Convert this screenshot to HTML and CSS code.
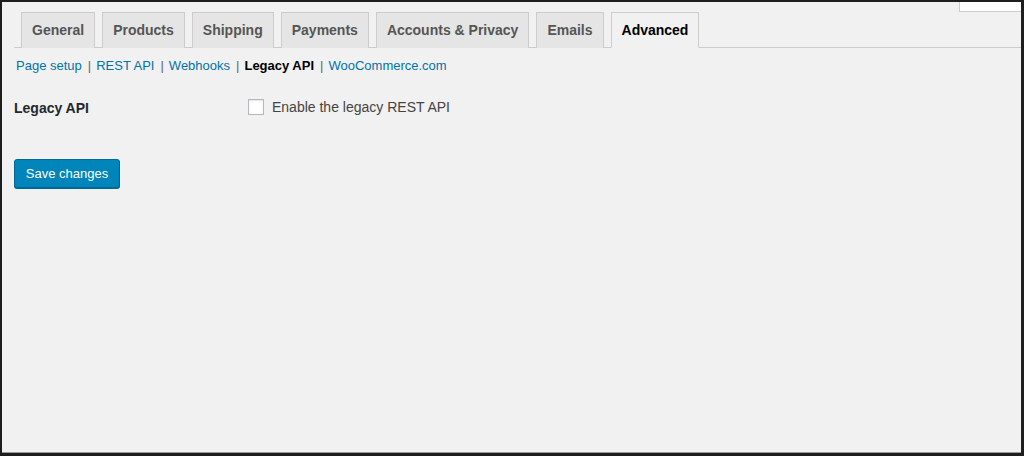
FILE: index.html
```html
<!DOCTYPE html>
<html>
<head>
<meta charset="utf-8">
<link rel="stylesheet" href="styles.css">
</head>
<body>
<div class="frame">
  <div class="topbox"></div>
  <div class="wrap">
    <nav class="tabs">
      <a class="tab">General</a>
      <a class="tab">Products</a>
      <a class="tab">Shipping</a>
      <a class="tab">Payments</a>
      <a class="tab">Accounts &amp; Privacy</a>
      <a class="tab">Emails</a>
      <a class="tab active">Advanced</a>
    </nav>
    <ul class="subnav">
      <li><a class="link">Page setup</a><span class="sep">|</span></li>
      <li><a class="link">REST API</a><span class="sep">|</span></li>
      <li><a class="link">Webhooks</a><span class="sep">|</span></li>
      <li><a class="link current">Legacy API</a><span class="sep">|</span></li>
      <li><a class="link">WooCommerce.com</a></li>
    </ul>
    <div class="row">
      <div class="label">Legacy API</div>
      <label class="field"><span class="check"></span><span>Enable the legacy REST API</span></label>
    </div>
    <button class="save">Save changes</button>
  </div>
</div>
</body>
</html>
```

FILE: styles.css
```css
* { box-sizing: border-box; }
html, body { margin: 0; padding: 0; }
body {
  font-family: "Liberation Sans", Arial, sans-serif;
  background: #f1f1f1;
}
.frame {
  position: relative;
  width: 1024px;
  height: 456px;
  background: #f1f1f1;
  border-left: 2px solid #1e1e1e;
  border-top: 2px solid #1e1e1e;
  border-right: 3px solid #1e1e1e;
  border-bottom: 3px solid #1e1e1e;
  box-shadow: inset 0 -1px 0 #9a9a9a;
  overflow: hidden;
}
.topbox {
  position: absolute;
  top: -2px;
  right: 0;
  width: 62px;
  height: 12px;
  background: #fff;
  border-left: 1px solid #ccc;
  border-bottom: 1px solid #ccc;
}
.wrap {
  padding: 10px 0 0 12px;
}
.tabs {
  display: flex;
  border-bottom: 1px solid #ccc;
  padding-left: 7px;
  gap: 7px;
}
.tab {
  display: block;
  font-size: 14px;
  font-weight: 700;
  line-height: 24px;
  padding: 5px 10px;
  color: #555;
  background: #e5e5e5;
  border: 1px solid #ccc;
  border-bottom: none;
  margin-bottom: -1px;
  height: 36px;
}
.tab.active {
  background: #f1f1f1;
  color: #000;
  border-bottom: 1px solid #f1f1f1;
}
.subnav {
  list-style: none;
  margin: 6px 0 0 2px;
  padding: 0;
  display: flex;
  font-size: 13px;
  line-height: 24px;
}
.link { color: #0073aa; }
.link.current { color: #000; font-weight: 700; }
.sep { color: #666; margin: 0 5px 0 6px; }
.row {
  display: flex;
  align-items: center;
  margin-top: 19px;
  height: 20px;
}
.label {
  width: 234px;
  font-size: 14px;
  font-weight: 700;
  color: #23282d;
  position: relative;
  top: 1px;
}
.field {
  display: flex;
  align-items: center;
  gap: 8px;
  font-size: 14px;
  color: #444;
}
.check {
  width: 16px;
  height: 16px;
  background: #fff;
  border: 1px solid #b4b9be;
  box-shadow: inset 0 1px 2px rgba(0,0,0,0.1);
}
.save {
  display: block;
  margin-top: 42px;
  height: 29px;
  width: 106px;
  padding: 0;
  font-family: inherit;
  font-size: 13px;
  color: #fff;
  background: #0085ba;
  border: 1px solid #006799;
  border-radius: 3px;
  box-shadow: 0 1px 0 #006799;
}
```
